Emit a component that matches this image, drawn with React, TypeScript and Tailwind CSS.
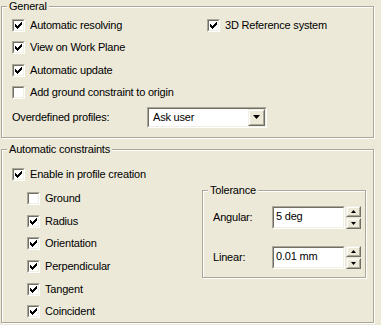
import React from 'react';

// classic 3d edges, outer + inner div
function Sunken({ className, children }: { className?: string; children?: React.ReactNode }) {
  return (
    <div className={`border border-t-[#aca899] border-l-[#aca899] border-b-white border-r-white ${className ?? ''}`}>
      <div className="w-full h-full border border-t-[#716f64] border-l-[#716f64] border-b-[#f1efe2] border-r-[#f1efe2] bg-white flex">
        {children}
      </div>
    </div>
  );
}

function Raised({ className, children }: { className?: string; children?: React.ReactNode }) {
  return (
    <div className={`border border-t-[#f1efe2] border-l-[#f1efe2] border-b-[#716f64] border-r-[#716f64] ${className ?? ''}`}>
      <div className="w-full h-full border border-t-white border-l-white border-b-[#aca899] border-r-[#aca899] bg-[#ece9d8] flex items-center justify-center">
        {children}
      </div>
    </div>
  );
}

function CheckMark() {
  const cols = [2, 3, 4, 3, 2, 1, 0];
  return (
    <svg width="7" height="7" viewBox="0 0 7 7" shapeRendering="crispEdges">
      {cols.map((y, x) => (
        <rect key={x} x={x} y={y} width="1" height="3" fill="#000" />
      ))}
    </svg>
  );
}

function Check({ label, checked = true }: { label: string; checked?: boolean }) {
  return (
    <div className="flex items-center h-[13px]">
      <Sunken className="w-[13px] h-[13px] shrink-0">
        <div className="w-full h-full flex items-center justify-center">{checked && <CheckMark />}</div>
      </Sunken>
      <span className="ml-[5px] whitespace-nowrap">{label}</span>
    </div>
  );
}

function Arrow({ up, w }: { up?: boolean; w: number }) {
  const h = Math.ceil(w / 2);
  const pts = up ? `0,${h} ${w / 2},0 ${w},${h}` : `0,0 ${w},0 ${w / 2},${h}`;
  return (
    <svg width={w} height={h} viewBox={`0 0 ${w} ${h}`}>
      <polygon points={pts} fill="#000" />
    </svg>
  );
}

function Spin({ label, value }: { label: string; value: string }) {
  return (
    <div className="flex items-center h-[23px]">
      <span className="w-[59px]">{label}</span>
      <Sunken className="w-[73px] h-[23px]">
        <span className="pl-[2px] pt-[2px]">{value}</span>
      </Sunken>
      <div className="flex flex-col ml-px">
        <Raised className="w-[15px] h-[11px]"><Arrow up w={5} /></Raised>
        <Raised className="w-[15px] h-[11px] mt-px"><Arrow w={5} /></Raised>
      </div>
    </div>
  );
}

const groupCls =
  'border border-[#aca899] shadow-[inset_1px_1px_0_#fff,1px_1px_0_#fff]';

export default function App() {
  return (
    <div className="w-[381px] h-[325px] bg-[#ece9d8] pl-px font-['Liberation_Sans',Arial,sans-serif] text-[11px] leading-[13px] tracking-[-0.2px] text-black overflow-hidden">
      <fieldset className={`${groupCls} w-[373px] h-[138px]`}>
        <legend className="ml-[5px] px-[2px] bg-[#ece9d8]">General</legend>
        <div className="pl-[10px] pt-[6px]">
          <div className="flex">
            <div className="flex flex-col gap-[9.33px] w-[195px]">
              <Check label="Automatic resolving" />
              <Check label="View on Work Plane" />
              <Check label="Automatic update" />
              <Check label="Add ground constraint to origin" checked={false} />
            </div>
            <Check label="3D Reference system" />
          </div>
          <div className="flex items-center mt-[8px]">
            <span className="w-[135px]">Overdefined profiles:</span>
            <Sunken className="w-[120px] h-[21px]">
              <span className="flex-1 pl-[4px] self-center">Ask user</span>
              <Raised className="w-[17px] h-[17px]"><Arrow w={7} /></Raised>
            </Sunken>
          </div>
        </div>
      </fieldset>

      <fieldset className={`${groupCls} w-[373px] h-[180px] mt-[5px]`}>
        <legend className="ml-[5px] px-[2px] bg-[#ece9d8]">Automatic constraints</legend>
        <div className="pl-[10px] pt-[12px]">
          <Check label="Enable in profile creation" />
          <div className="flex mt-[3px]">
            <div className="flex flex-col gap-[9.67px] pl-[15px] pt-[8px] w-[190px]">
              <Check label="Ground" checked={false} />
              <Check label="Radius" />
              <Check label="Orientation" />
              <Check label="Perpendicular" />
              <Check label="Tangent" />
              <Check label="Coincident" />
            </div>
            <fieldset className={`${groupCls} w-[164px] h-[94px]`}>
              <legend className="ml-[5px] px-[2px] bg-[#ece9d8]">Tolerance</legend>
              <div className="pl-[10px] pt-[9px] flex flex-col gap-[17px]">
                <Spin label="Angular:" value="5 deg" />
                <Spin label="Linear:" value="0.01 mm" />
              </div>
            </fieldset>
          </div>
        </div>
      </fieldset>
    </div>
  );
}
